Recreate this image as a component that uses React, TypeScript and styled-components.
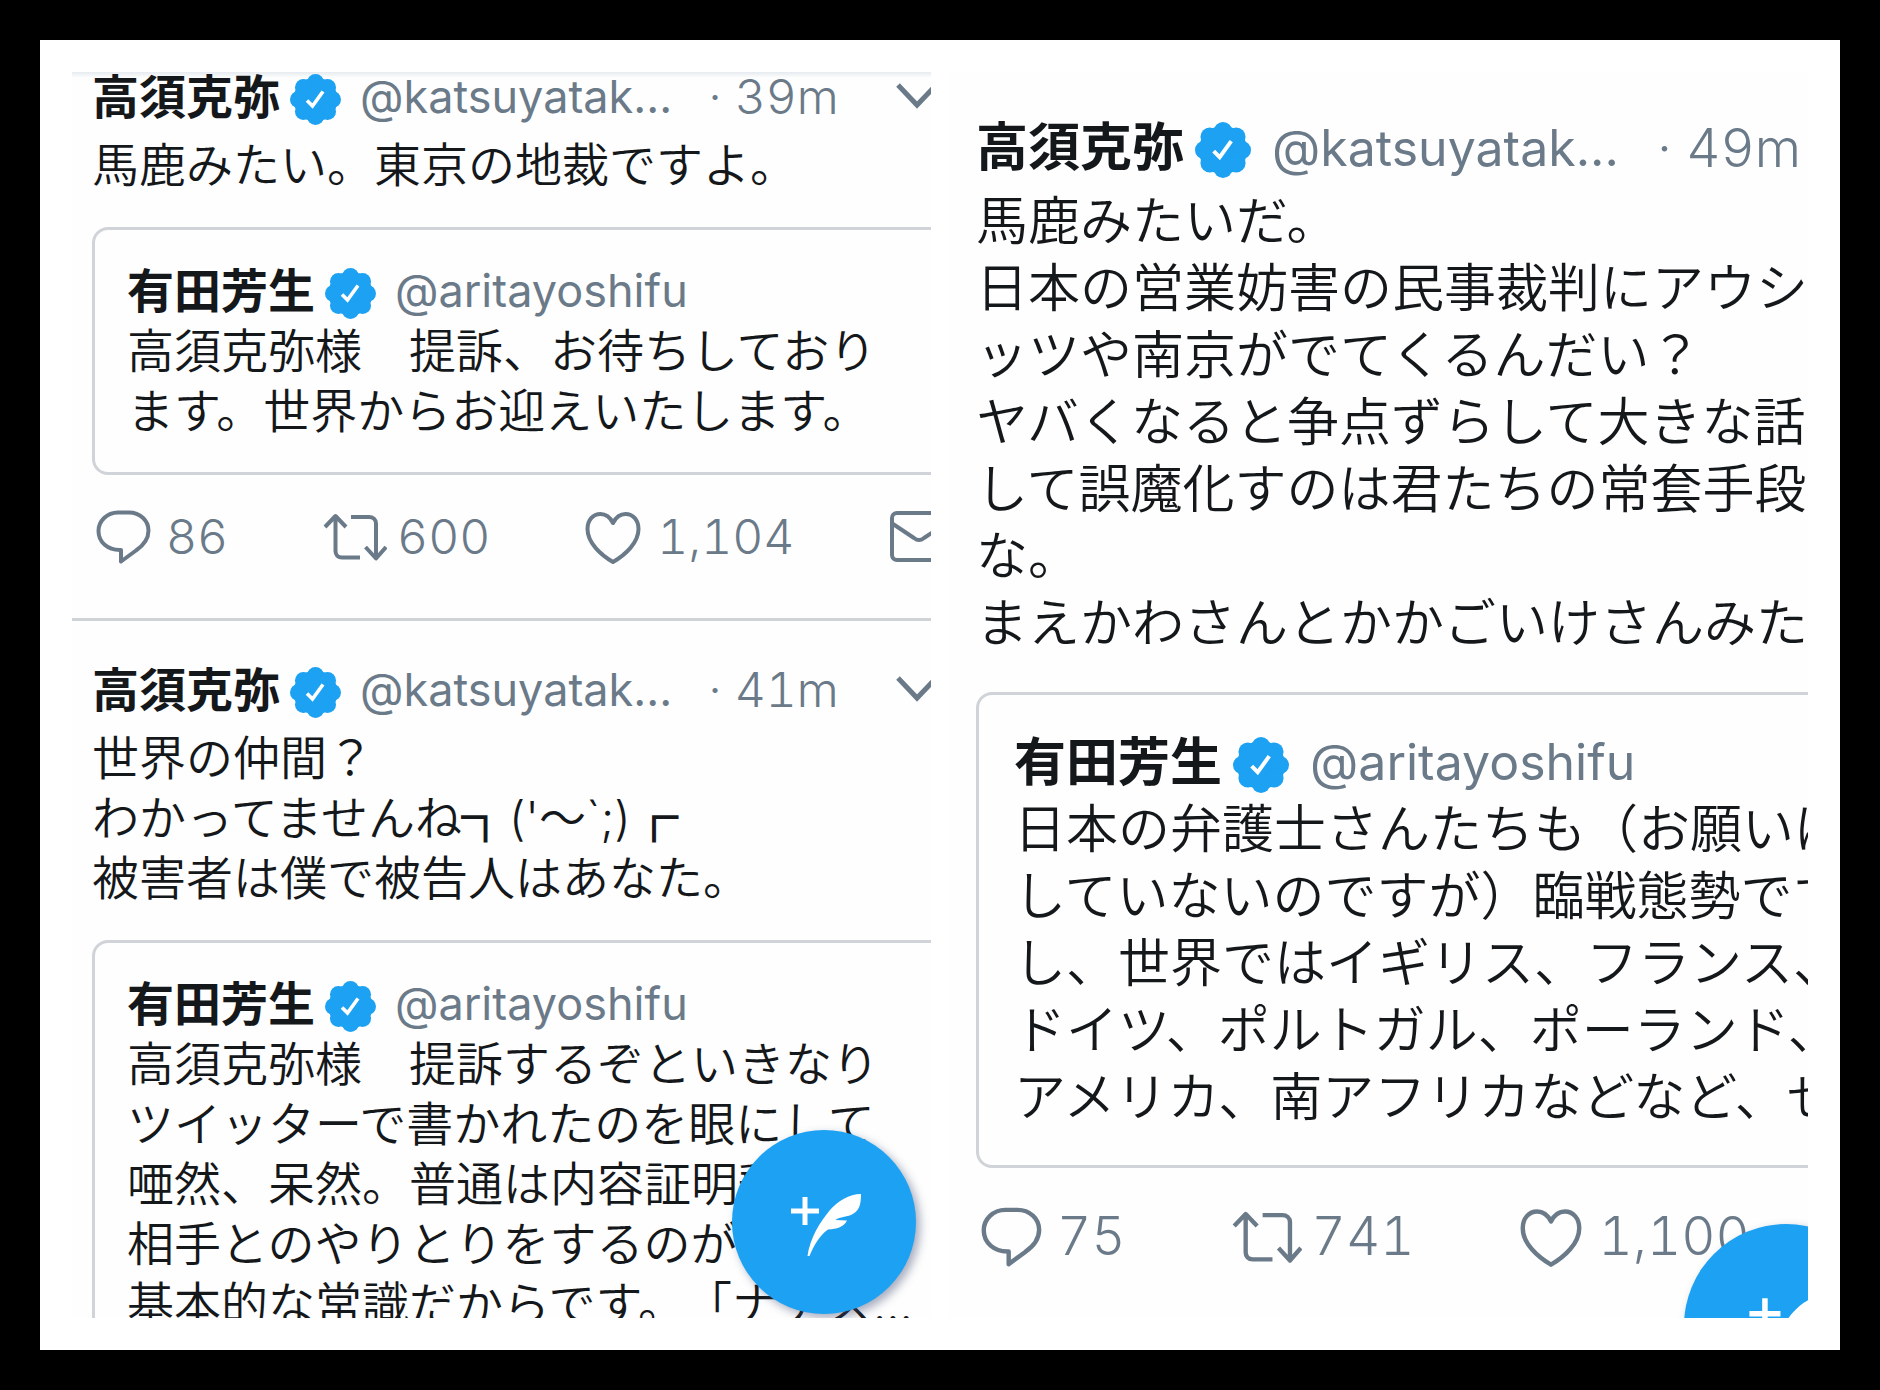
import React from "react";
import styled, { createGlobalStyle } from "styled-components";

type Scale = "small" | "large";

interface Metrics {
  font: number;
  line: number;
  latin: number;
  digits: number;
  head: number;
  headGap: number;
  badge: number;
  icon: number;
  nameGap: number;
  handleGap: number;
  timeGap: number;
  menuGap: number;
  actionGap: number;
  actionInset: number;
  space: number;
  quotePad: number;
  inset: number;
  fab: number;
}

const metrics: Record<Scale, Metrics> = {
  small: {
    font: 47, line: 60, latin: 45, digits: 48, head: 50, headGap: 13, badge: 51, icon: 56,
    nameGap: 10, handleGap: 19, timeGap: 36, menuGap: 57, actionGap: 95, actionInset: 4,
    space: 32, quotePad: 31, inset: 20, fab: 184,
  },
  large: {
    font: 52, line: 67, latin: 50, digits: 53, head: 58, headGap: 11, badge: 56, icon: 62,
    nameGap: 11, handleGap: 21, timeGap: 38, menuGap: 62, actionGap: 106, actionInset: 5,
    space: 35, quotePad: 34, inset: 27, fab: 204,
  },
};

const GlobalStyle = createGlobalStyle`
  *, *::before, *::after { box-sizing: border-box; }
  body {
    margin: 0;
    background: #000;
    color: #15181b;
    font-family: Inter, "Noto Sans CJK JP", sans-serif;
    text-spacing-trim: space-all;
  }
`;

const Page = styled.main`
  height: 100vh;
  padding: 40px;
  background: #000;
`;

const Sheet = styled.div`
  height: 100%;
  padding: 32px;
  display: grid;
  grid-template-columns: 1fr 1fr;
  gap: 18px;
  background: #fff;
`;

const Panel = styled.section<{ $top: number }>`
  position: relative;
  min-width: 0;
  min-height: 0;
  overflow: hidden;
  padding-top: ${(p) => p.$top}px;
  background: #fefefe;
`;

const TopShade = styled.div`
  position: absolute;
  inset: 0 0 auto;
  height: 6px;
  background: linear-gradient(#e6ebf0, #fefefe);
`;

const Post = styled.article<{ $m: Metrics; $divided?: boolean }>`
  position: relative;
  padding: 0 0 51px ${(p) => p.$m.inset}px;
  white-space: nowrap;
  font-size: ${(p) => p.$m.font}px;
  font-weight: 350;
  line-height: ${(p) => p.$m.line}px;
  border-bottom: ${(p) => (p.$divided ? "3px solid #d0d3d6" : "0")};

  & + & {
    padding-top: 44px;
  }
`;

const Head = styled.header<{ $height: number }>`
  display: flex;
  align-items: center;
  height: ${(p) => p.$height}px;
  line-height: ${(p) => p.$height}px;
`;

const Name = styled.strong<{ $m: Metrics }>`
  flex: none;
  margin-right: ${(p) => p.$m.nameGap}px;
  font-weight: 700;
`;

const BadgeIcon = styled.svg<{ $size: number }>`
  flex: none;
  width: ${(p) => p.$size}px;
  height: ${(p) => p.$size}px;
  margin-top: 4px;
`;

const Handle = styled.a<{ $m: Metrics }>`
  flex: none;
  margin-left: ${(p) => p.$m.handleGap}px;
  color: #6b7a89;
  font-size: ${(p) => p.$m.latin}px;
  font-weight: 400;
  text-decoration: none;
`;

const Time = styled.time<{ $m: Metrics }>`
  flex: none;
  margin-left: ${(p) => p.$m.timeGap}px;
  color: #6b7a89;
  font-size: ${(p) => p.$m.digits}px;
  font-variant-numeric: tabular-nums;
`;

const IconButton = styled.button<{ $m: Metrics }>`
  flex: none;
  display: flex;
  margin: 0 0 0 ${(p) => p.$m.menuGap}px;
  padding: 0;
  border: 0;
  background: none;
  color: #6b7a89;
`;

const Body = styled.p<{ $m: Metrics }>`
  margin: ${(p) => p.$m.headGap}px 0 0;
`;

const Arm = styled.span`
  -webkit-text-stroke: 2px currentColor;
`;

const Quote = styled.blockquote<{ $m: Metrics }>`
  width: 110%;
  margin: ${(p) => p.$m.space}px 0 0;
  padding: ${(p) => p.$m.quotePad}px ${(p) => p.$m.space}px;
  border: 3px solid #d0d3d8;
  border-radius: 16px;
`;

const QuoteText = styled.p`
  margin: 0;
`;

const Actions = styled.footer<{ $m: Metrics }>`
  display: flex;
  gap: ${(p) => p.$m.actionGap}px;
  margin-top: ${(p) => p.$m.space}px;
  padding-left: ${(p) => p.$m.actionInset}px;
`;

const Action = styled.button<{ $m: Metrics; $gap: number }>`
  flex: none;
  display: flex;
  align-items: center;
  gap: ${(p) => p.$gap}px;
  height: ${(p) => p.$m.line}px;
  padding: 0;
  border: 0;
  background: none;
  color: #6b7a89;
  font: 350 ${(p) => p.$m.digits}px / ${(p) => p.$m.line}px Inter, sans-serif;
  font-variant-numeric: tabular-nums;
`;

const LineIcon = styled.svg<{ $size: number }>`
  flex: none;
  width: ${(p) => p.$size}px;
  height: ${(p) => p.$size}px;
  fill: none;
  stroke: currentColor;
  stroke-width: 4;
  stroke-linejoin: round;
`;

const Compose = styled.button<{ $m: Metrics; $right: number; $bottom: number }>`
  position: absolute;
  right: ${(p) => p.$right}px;
  bottom: ${(p) => p.$bottom}px;
  width: ${(p) => p.$m.fab}px;
  height: ${(p) => p.$m.fab}px;
  padding: 0;
  border: 0;
  border-radius: 50%;
  background: #1da1f2;
  box-shadow: 4px 4px 10px rgba(60, 70, 110, 0.45);
`;

const ComposeIcon = styled.svg`
  display: block;
  width: 100%;
  height: 100%;
`;

const lobes = Array.from({ length: 8 }, (_, i) => {
  const a = (i * Math.PI) / 4;
  return { x: 25.5 + 17 * Math.sin(a), y: 25.5 - 17 * Math.cos(a) };
});

function Badge({ m }: { m: Metrics }) {
  return (
    <BadgeIcon $size={m.badge} viewBox="0 0 51 51" role="img" aria-label="Verified">
      <g fill="#1da1f2">
        <circle cx="25.5" cy="25.5" r="22" />
        {lobes.map((l, i) => (
          <circle key={i} cx={l.x} cy={l.y} r="8.5" />
        ))}
      </g>
      <path d="M17 26.5 L22.5 32 L33 17.5" fill="none" stroke="#fff" strokeWidth="3.6" />
    </BadgeIcon>
  );
}

function Chevron() {
  return (
    <LineIcon $size={42} viewBox="0 0 42 42" aria-hidden="true">
      <path d="M2 9 L21 29 L40 9" strokeWidth="5" strokeLinejoin="miter" />
    </LineIcon>
  );
}

function ReplyIcon({ m }: { m: Metrics }) {
  return (
    <LineIcon $size={m.icon} viewBox="0 0 56 56" aria-hidden="true">
      <path d="M22 3.5 H33 C44 3.5 52.5 11.5 52.5 21.5 C52.5 30 48 36 40 41.5 L25 52.5 V41 C11.5 41.5 2.5 33 2.5 22 C2.5 12 11 3.5 22 3.5 Z" />
    </LineIcon>
  );
}

function RetweetIcon({ m }: { m: Metrics }) {
  return (
    <LineIcon $size={m.icon + 8} viewBox="0 0 64 64" aria-hidden="true">
      <path d="M2 22 L12.5 11 L23 22 M12.5 12 V46 C12.5 50 15 52.5 19 52.5 H37" />
      <path d="M28 12 H46 C50 12 53 14.5 53 18.5 V53 M42.5 42 L53 53.5 L63 42" />
    </LineIcon>
  );
}

function HeartIcon({ m }: { m: Metrics }) {
  return (
    <LineIcon $size={m.icon} viewBox="0 0 56 56" aria-hidden="true">
      <path d="M28 14 C25 8 21 5 15.5 5 C8 5 2.5 11 2.5 20 C2.5 34 16 46 28 53 C40 46 53.5 34 53.5 20 C53.5 11 48 5 40.5 5 C35 5 31 8 28 14 Z" />
    </LineIcon>
  );
}

function MailIcon({ m }: { m: Metrics }) {
  return (
    <LineIcon $size={m.icon + 4} viewBox="0 0 60 60" aria-hidden="true">
      <rect x="3" y="6" width="54" height="47" rx="5" />
      <path d="M4 17 L25 31 Q30 35 35 31 L56 17" />
    </LineIcon>
  );
}

function Feather() {
  return (
    <ComposeIcon viewBox="0 0 184 184" aria-hidden="true">
      <path d="M73 67 V95 M59 81 H87" stroke="#fff" strokeWidth="5" fill="none" />
      <path
        fill="#fff"
        d="M129 64 C117 64 106 71 98 80 C88 92 78 108 75.5 126 H77.5 C82 115 88 105 96 99.5 C105 99 112 97 115 90.5 L103.5 90 C107 87 113 87 119 85 C127 81 129 76 129 64 Z"
      />
    </ComposeIcon>
  );
}

function Lines({ text }: { text: string[] }) {
  return (
    <>
      {text.map((line, i) => (
        <React.Fragment key={i}>
          {i > 0 && <br />}
          {line.split(/([┐┌])/).map((part, j) =>
            part === "┐" || part === "┌" ? <Arm key={j}>{part}</Arm> : part
          )}
        </React.Fragment>
      ))}
    </>
  );
}

interface TweetProps {
  m: Metrics;
  time: string;
  body: string[];
  quote: string[];
  counts?: [string, string, string];
  divided?: boolean;
}

function Tweet({ m, time, body, quote, counts, divided }: TweetProps) {
  return (
    <Post $m={m} $divided={divided}>
      <Head $height={m.head}>
        <Name $m={m}>高須克弥</Name>
        <Badge m={m} />
        <Handle $m={m} href="#katsuyatak">@katsuyatak...</Handle>
        <Time $m={m}>· {time}</Time>
        <IconButton $m={m} type="button" aria-label="More">
          <Chevron />
        </IconButton>
      </Head>
      <Body $m={m}><Lines text={body} /></Body>
      <Quote $m={m}>
        <Head $height={m.line}>
          <Name $m={m}>有田芳生</Name>
          <Badge m={m} />
          <Handle $m={m} href="#aritayoshifu">@aritayoshifu</Handle>
        </Head>
        <QuoteText><Lines text={quote} /></QuoteText>
      </Quote>
      {counts && (
        <Actions $m={m}>
          <Action $m={m} $gap={14} type="button"><ReplyIcon m={m} />{counts[0]}</Action>
          <Action $m={m} $gap={10} type="button"><RetweetIcon m={m} />{counts[1]}</Action>
          <Action $m={m} $gap={16} type="button"><HeartIcon m={m} />{counts[2]}</Action>
          <Action $m={m} $gap={14} type="button" aria-label="Message"><MailIcon m={m} /></Action>
        </Actions>
      )}
    </Post>
  );
}

export default function App() {
  const s = metrics.small;
  const l = metrics.large;
  return (
    <>
      <GlobalStyle />
      <Page lang="ja">
        <Sheet>
          <Panel $top={0}>
            <TopShade />
            <Tweet
              m={s}
              time="39m"
              divided
              body={["馬鹿みたい。東京の地裁ですよ。"]}
              quote={["高須克弥様　提訴、お待ちしており", "ます。世界からお迎えいたします。"]}
              counts={["86", "600", "1,104"]}
            />
            <Tweet
              m={s}
              time="41m"
              body={["世界の仲間？", "わかってませんね┐('〜`;)┌", "被害者は僕で被告人はあなた。"]}
              quote={[
                "高須克弥様　提訴するぞといきなり",
                "ツイッターで書かれたのを眼にして",
                "唖然、呆然。普通は内容証明郵便で",
                "相手とのやりとりをするのが",
                "基本的な常識だからです。「ナチス…",
              ]}
            />
            <Compose $m={s} $right={15} $bottom={4} type="button" aria-label="Compose">
              <Feather />
            </Compose>
          </Panel>
          <Panel $top={47}>
            <Tweet
              m={l}
              time="49m"
              body={[
                "馬鹿みたいだ。",
                "日本の営業妨害の民事裁判にアウシ",
                "ッツや南京がでてくるんだい？",
                "ヤバくなると争点ずらして大きな話に",
                "して誤魔化すのは君たちの常套手段だ",
                "な。",
                "まえかわさんとかかごいけさんみた",
              ]}
              quote={[
                "日本の弁護士さんたちも（お願いは",
                "していないのですが）臨戦態勢です",
                "し、世界ではイギリス、フランス、",
                "ドイツ、ポルトガル、ポーランド、",
                "アメリカ、南アフリカなどなど、せ",
              ]}
              counts={["75", "741", "1,100"]}
            />
            <Compose $m={l} $right={-80} $bottom={-110} type="button" aria-label="Compose">
              <Feather />
            </Compose>
          </Panel>
        </Sheet>
      </Page>
    </>
  );
}
